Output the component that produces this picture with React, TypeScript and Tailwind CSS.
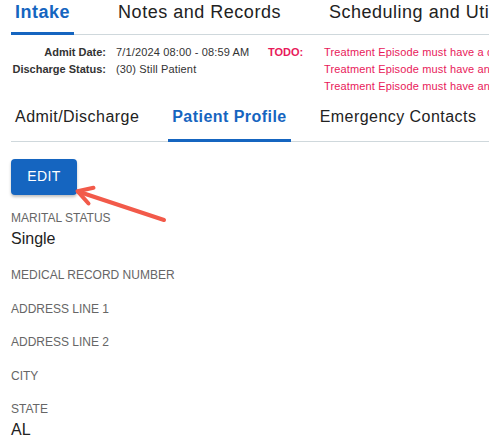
const topTabs = ['Intake', 'Notes and Records', 'Scheduling and Utilization']
const subTabs = ['Admit/Discharge', 'Patient Profile', 'Emergency Contacts']

const todos = [
  'Treatment Episode must have a discharge date',
  'Treatment Episode must have an admit type',
  'Treatment Episode must have an admit source',
]

const fields: { label: string; value?: string }[] = [
  { label: 'Marital Status', value: 'Single' },
  { label: 'Medical Record Number' },
  { label: 'Address Line 1' },
  { label: 'Address Line 2' },
  { label: 'City' },
  { label: 'State', value: 'AL' },
]

export default function App() {
  return (
    <div
      className="relative w-[489px] h-[446px] overflow-hidden bg-white text-[#222]"
      style={{ fontFamily: '"Liberation Sans", Arial, sans-serif' }}
    >
      {/* Top tabs */}
      <div className="ml-[11px] flex gap-[40px] border-b border-[#cfd8dc] whitespace-nowrap">
        {topTabs.map((t, i) => (
          <div
            key={t}
            className={`-mb-px shrink-0 px-1 pt-px pb-[9px] text-[18px] leading-[22px] tracking-[0.02857em] border-b-[3px] ${
              i === 0 ? 'border-[#1565c0] font-bold text-[#1565c0]' : 'border-transparent text-[#222]'
            }`}
          >
            {t}
          </div>
        ))}
      </div>

      {/* Episode info */}
      <div className="mt-[9px] flex text-[11px] leading-[17px] whitespace-nowrap">
        <div className="w-[106px] shrink-0 pl-[11px] text-right font-bold text-[#333]">
          <div>Admit Date:</div>
          <div>Discharge Status:</div>
        </div>
        <div className="ml-[10px] w-[152px] shrink-0 tracking-[0.15px] text-[#333]">
          <div>7/1/2024 08:00 - 08:59 AM</div>
          <div>(30) Still Patient</div>
        </div>
        <div className="w-[56px] shrink-0 font-bold text-[#e8195a]">TODO:</div>
        <div className="shrink-0 tracking-[0.15px] text-[#e8195a]">
          {todos.map((t) => (
            <div key={t}>{t}</div>
          ))}
        </div>
      </div>

      {/* Sub tabs */}
      <div className="mt-[12px] ml-[11px] flex gap-[25px] border-b border-[#cfd8dc] whitespace-nowrap">
        {subTabs.map((t, i) => (
          <div
            key={t}
            className={`-mb-px shrink-0 px-1 pb-[11.5px] text-[16px] leading-[20px] tracking-[0.02857em] border-b-[3px] ${
              i === 1 ? 'border-[#1565c0] font-bold text-[#1565c0]' : 'border-transparent text-[#222]'
            }`}
          >
            {t}
          </div>
        ))}
      </div>

      {/* Profile */}
      <div className="px-[11px]">
        <button className="mt-[17px] h-[36px] w-[66px] rounded bg-[#1565c0] text-[14px] font-medium tracking-[0.4px] text-white shadow-[0_2px_3px_rgba(0,0,0,0.25)]">
          EDIT
        </button>

        <div className="mt-[14px] flex flex-col gap-[15.5px]">
          {fields.map((f) => (
            <div key={f.label}>
              <div className="text-[12px] leading-[18px] uppercase text-[#666]">{f.label}</div>
              {f.value && <div className="text-[16px] leading-[24px] text-[#222]">{f.value}</div>}
            </div>
          ))}
        </div>
      </div>

      {/* Annotation arrow */}
      <svg
        className="absolute left-[70px] top-[180px]"
        width="100"
        height="45"
        viewBox="0 0 100 45"
        fill="none"
        stroke="#f25a4a"
        strokeWidth="4"
        strokeLinecap="round"
        strokeLinejoin="round"
      >
        <line x1="8" y1="11.5" x2="94" y2="40" />
        <polyline points="23.5,7.8 7.5,11.2 18.5,23.5" />
      </svg>
    </div>
  )
}
